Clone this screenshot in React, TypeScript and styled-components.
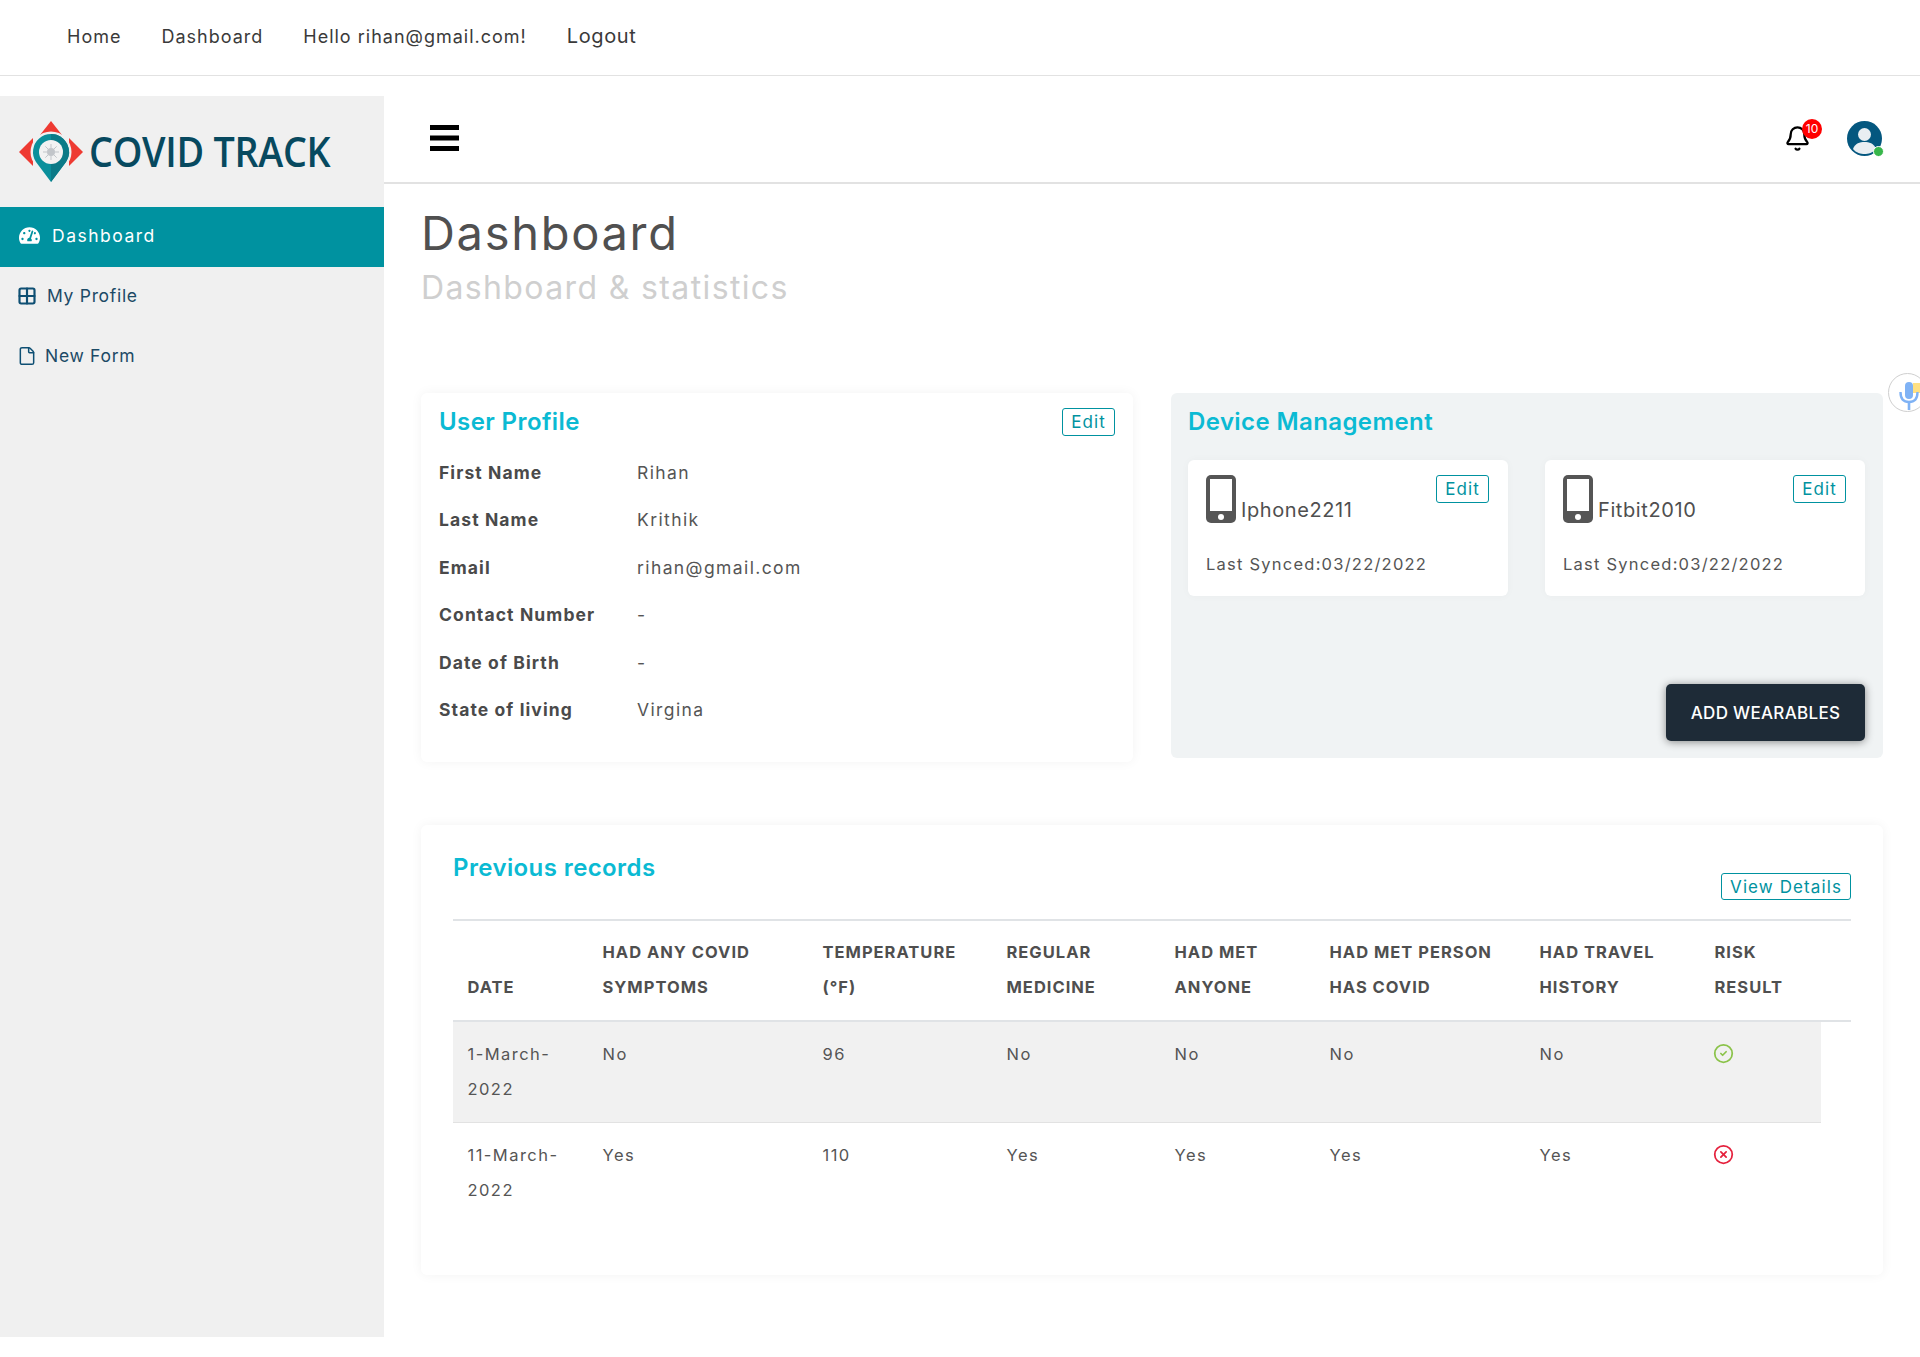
import React from "react";
import styled, { createGlobalStyle } from "styled-components";
import { Bell, CircleCheck, CircleX, File, Grid2x2 } from "lucide-react";
import { FaTachometerAlt } from "react-icons/fa";

const Global = createGlobalStyle`
  html, body { margin: 0; padding: 0; background: #fff; overflow: hidden; }
  * { box-sizing: border-box; }
  body { font-family: Inter, "Open Sans", sans-serif; color: #4f4f4f; }
`;

const Root = styled.div`
  position: relative;
  width: 1920px;
  height: 1357px;
  overflow: hidden;
`;

const TopNav = styled.nav`
  height: 76px;
  border-bottom: 1px solid #e2e2e2;
  display: flex;
  align-items: center;
  padding: 0 0 3px 67px;
  gap: 40px;
`;

const TopLink = styled.a<{ $big?: boolean }>`
  color: #3a3a3a;
  font-size: ${(p) => (p.$big ? "20px" : "18px")};
  letter-spacing: ${(p) => (p.$big ? "0.6px" : "1px")};
  font-weight: 400;
`;

const Shell = styled.div`
  display: flex;
  margin-top: 20px;
`;

const Sidebar = styled.aside`
  width: 384px;
  height: 1241px;
  flex: none;
  background: #f0f0f0;
`;

const Brand = styled.div`
  height: 111px;
  display: flex;
  align-items: flex-start;
  padding: 23px 0 0 18px;
  gap: 5px;
`;

const BrandText = styled.span`
  font-family: "Open Sans", sans-serif;
  font-size: 41px;
  font-weight: 600;
  color: #07495f;
  letter-spacing: -0.3px;
  line-height: 65px;
  white-space: nowrap;
  transform: scaleX(0.92);
  transform-origin: left center;
`;

const MenuItem = styled.a<{ $active?: boolean; $gap: number }>`
  height: 60px;
  display: flex;
  align-items: center;
  gap: ${(p) => p.$gap}px;
  padding: 0 0 3px 19px;
  font-size: 17.5px;
  letter-spacing: ${(p) => (p.$active ? "1.5px" : "0.7px")};
  color: ${(p) => (p.$active ? "#fff" : "#1c4a66")};
  background: ${(p) => (p.$active ? "#0092a0" : "transparent")};
  > svg {
    flex: none;
    margin-left: ${(p) => (p.$active ? "0" : "-2px")};
  }
`;

const Main = styled.main`
  flex: 1;
  min-width: 0;
`;

const MainHeader = styled.header`
  height: 88px;
  border-bottom: 2px solid #e2e2e2;
  display: flex;
  align-items: center;
  justify-content: space-between;
  padding: 0 38px 2px 46px;
`;

const HeaderIcons = styled.div`
  display: flex;
  align-items: center;
  gap: 38px;
  margin-top: 1px;
`;

const BellWrap = styled.div`
  position: relative;
  width: 24px;
  height: 24px;
  margin: -4px 1px 0 -1px;
`;

const Badge = styled.span`
  position: absolute;
  top: -6px;
  left: 18px;
  width: 20px;
  height: 20px;
  border-radius: 50%;
  background: #ff0000;
  color: #fff;
  font-size: 12px;
  display: flex;
  align-items: center;
  justify-content: center;
`;

const AvatarWrap = styled.div`
  position: relative;
  width: 35px;
  height: 35px;
`;

const OnlineDot = styled.span`
  position: absolute;
  right: -2px;
  bottom: -1px;
  width: 11px;
  height: 11px;
  border-radius: 50%;
  background: #38b64a;
  border: 1px solid #fff;
`;

const Content = styled.div`
  padding: 24px 37px 0;
`;

const PageTitle = styled.h1`
  margin: 0;
  font-size: 47px;
  line-height: 50px;
  font-weight: 400;
  color: #505050;
  letter-spacing: 1.7px;
`;

const PageSub = styled.h2`
  margin: 10px 0 0;
  font-size: 32px;
  line-height: 40px;
  font-weight: 400;
  color: #cfcfcf;
  letter-spacing: 1.37px;
`;

const TwoCols = styled.div`
  display: grid;
  grid-template-columns: 712px 712px;
  gap: 38px;
  align-items: start;
  margin-top: 85px;
`;

const ProfileCard = styled.section`
  height: 369px;
  background: #fff;
  border-radius: 6px;
  box-shadow: 0 0 12px rgba(0, 0, 0, 0.05);
  padding: 15px 18px 0;
`;

const CardHead = styled.div`
  display: flex;
  justify-content: space-between;
  align-items: flex-start;
`;

const CardTitle = styled.h3`
  margin: 0;
  font-size: 24px;
  line-height: 28px;
  font-weight: 600;
  color: #0bbad3;
  letter-spacing: 0.4px;
`;

const OutlineButton = styled.button<{ $wide?: boolean }>`
  height: ${(p) => (p.$wide ? "27px" : "28px")};
  padding: 0 8px;
  background: #fff;
  border: 1px solid #0092a0;
  border-radius: 3px;
  color: #0092a0;
  font: inherit;
  font-size: 17px;
  letter-spacing: 1.1px;
`;

const ProfileRows = styled.dl`
  margin: 12.5px 0 0;
  display: grid;
  grid-template-columns: 198px 1fr;
  grid-auto-rows: 47.5px;
  align-items: center;
  font-size: 17.5px;
`;

const RowLabel = styled.dt`
  font-weight: 700;
  color: #4a4a4a;
  letter-spacing: 1.1px;
`;

const RowValue = styled.dd`
  margin: 0;
  color: #555;
  letter-spacing: 1.4px;
`;

const DevicePanel = styled.section`
  height: 365px;
  background: #f0f3f4;
  border-radius: 6px;
  padding: 15px 18px 0 17px;
  display: flex;
  flex-direction: column;
`;

const DeviceGrid = styled.div`
  display: grid;
  grid-template-columns: 320px 320px;
  gap: 37px;
  margin-top: 24px;
`;

const DeviceCard = styled.div`
  height: 136px;
  background: #fff;
  border-radius: 6px;
  padding: 15px 19px 0 18px;
  box-shadow: 0 0 8px rgba(0, 0, 0, 0.03);
`;

const DeviceTop = styled.div`
  display: flex;
  justify-content: space-between;
  align-items: flex-start;
`;

const DeviceName = styled.div`
  display: flex;
  align-items: flex-end;
  gap: 5px;
  font-size: 20px;
  line-height: 26px;
  color: #4f4f4f;
  letter-spacing: 0.6px;
`;

const DeviceSynced = styled.div`
  margin-top: 31px;
  font-size: 16.5px;
  color: #555;
  letter-spacing: 1.23px;
`;

const AddButton = styled.button`
  align-self: flex-end;
  margin-top: auto;
  margin-bottom: 17px;
  width: 199px;
  height: 57px;
  border: 0;
  border-radius: 5px;
  background: #1e2b37;
  color: #fff;
  font: inherit;
  font-size: 17px;
  font-weight: 500;
  letter-spacing: 0.3px;
  box-shadow: 0 1px 8px rgba(0, 0, 0, 0.45);
`;

const RecordsCard = styled.section`
  margin-top: 63px;
  height: 450px;
  background: #fff;
  border-radius: 6px;
  box-shadow: 0 0 12px rgba(0, 0, 0, 0.05);
  padding: 29px 32px 0;
`;

const RecordsHead = styled.div`
  height: 65px;
  display: flex;
  justify-content: space-between;
  align-items: flex-start;
`;

const DetailsWrap = styled.div`
  margin-top: 19px;
`;

const HeadRow = styled.div`
  display: grid;
  grid-template-columns: 135px 220px 184px 168px 155px 210px 175px 151px;
  border-top: 2px solid #e0e3e6;
  border-bottom: 2px solid #e0e3e6;
  padding: 14px 0 15px;
  line-height: 35px;
  font-size: 16.5px;
  font-weight: 700;
  color: #4f4f4f;
  letter-spacing: 1px;
  text-transform: uppercase;
`;

const HeadCell = styled.div`
  padding-left: 14.5px;
  align-self: end;
`;

const DataRow = styled.div<{ $striped?: boolean }>`
  width: 1368px;
  display: grid;
  grid-template-columns: 135px 220px 184px 168px 155px 210px 175px 121px;
  padding: 15px 0;
  line-height: 35px;
  font-size: 16.5px;
  color: #555;
  letter-spacing: 1.45px;
  background: ${(p) => (p.$striped ? "#f1f1f1" : "transparent")};
  border-bottom: ${(p) => (p.$striped ? "1px solid #e2e2e2" : "0")};
`;

const DataCell = styled.div`
  padding-left: 14.5px;
`;

const StatusCell = styled(DataCell)`
  display: flex;
  align-items: flex-start;
  padding-top: 6px;
  padding-left: 13px;
`;

const MicBubble = styled.div`
  position: absolute;
  left: 1888px;
  top: 373px;
  width: 39px;
  height: 39px;
  border-radius: 50%;
  background: #fff;
  border: 1px solid #cfcfcf;
  overflow: hidden;
`;

const Logo = () => (
  <svg width="66" height="66" viewBox="0 0 66 66" style={{ flex: "none" }}>
    <polygon points="33,2 44,16 22,16" fill="#ee3a32" />
    <polygon points="1,33 15,19 15,47" fill="#ee3a32" />
    <polygon points="65,33 51,19 51,47" fill="#ee3a32" />
    <circle cx="33" cy="33" r="20.5" fill="#f0f0f0" />
    <path d="M33 63 L18 43 A18 18 0 1 1 48 43 Z" fill="#0a8f9b" />
    <path d="M33 63 L33 15 A18 18 0 0 1 48 43 Z" fill="#0b7a87" />
    <circle cx="33" cy="33" r="12" fill="#f2f2f2" />
    <circle cx="33" cy="33" r="4" fill="#c2c5c9" />
    {[0, 45, 90, 135, 180, 225, 270, 315].map((a) => (
      <line
        key={a}
        x1={33 + 4 * Math.cos((a * Math.PI) / 180)}
        y1={33 + 4 * Math.sin((a * Math.PI) / 180)}
        x2={33 + 8 * Math.cos((a * Math.PI) / 180)}
        y2={33 + 8 * Math.sin((a * Math.PI) / 180)}
        stroke="#c2c5c9"
        strokeWidth="1"
      />
    ))}
  </svg>
);

const Burger = () => (
  <svg width="29" height="26" viewBox="0 0 29 26">
    <rect x="0" y="0" width="29" height="5" fill="#000" />
    <rect x="0" y="10.5" width="29" height="5" fill="#000" />
    <rect x="0" y="21" width="29" height="5" fill="#000" />
  </svg>
);

const Avatar = () => (
  <svg width="35" height="35" viewBox="0 0 35 35">
    <circle cx="17.5" cy="17.5" r="17.5" fill="#04577f" />
    <circle cx="17.5" cy="13.5" r="6.5" fill="#e9eef2" />
    <path d="M6 28 C8 22 13 21 17.5 21 C22 21 27 22 29 28 C26 32 21 33 17.5 33 C14 33 9 32 6 28 Z" fill="#e9eef2" />
  </svg>
);

const Phone = () => (
  <svg width="30" height="48" viewBox="0 0 30 48" style={{ flex: "none" }}>
    <rect x="0" y="0" width="30" height="48" rx="5" fill="#555" />
    <rect x="4" y="4" width="22" height="32" fill="#fff" />
    <circle cx="15" cy="42" r="3" fill="#fff" />
  </svg>
);

const Mic = () => (
  <svg width="39" height="39" viewBox="0 0 39 39" style={{ display: "block", margin: "-1px" }}>
    <rect x="25" y="10" width="8" height="10" fill="#ffe082" />
    <rect x="17" y="9" width="8" height="17" rx="4" fill="#7fb2f5" />
    <path d="M12.5 19 C12.5 26 16 29 21 29 C26 29 29.5 26 29.5 19" fill="none" stroke="#7fb2f5" strokeWidth="2.4" />
    <rect x="19.7" y="28" width="2.6" height="9" fill="#7fb2f5" />
  </svg>
);

const profile: [string, string][] = [
  ["First Name", "Rihan"],
  ["Last Name", "Krithik"],
  ["Email", "rihan@gmail.com"],
  ["Contact Number", "-"],
  ["Date of Birth", "-"],
  ["State of living", "Virgina"],
];

const heads: React.ReactNode[] = [
  "Date",
  <>Had any covid<br />symptoms</>,
  <>Temperature<br />(°F)</>,
  <>Regular<br />medicine</>,
  <>Had met<br />anyone</>,
  <>Had met person<br />has covid</>,
  <>Had travel<br />history</>,
  <>Risk<br />result</>,
];

const rows = [
  { date: "1-March-2022", cells: ["No", "96", "No", "No", "No", "No"], ok: true },
  { date: "11-March-2022", cells: ["Yes", "110", "Yes", "Yes", "Yes", "Yes"], ok: false },
];

export default function App() {
  return (
    <Root>
      <Global />
      <TopNav>
        <TopLink>Home</TopLink>
        <TopLink>Dashboard</TopLink>
        <TopLink>Hello rihan@gmail.com!</TopLink>
        <TopLink $big>Logout</TopLink>
      </TopNav>
      <Shell>
        <Sidebar>
          <Brand>
            <Logo />
            <BrandText>COVID TRACK</BrandText>
          </Brand>
          <MenuItem $active $gap={12}>
            <FaTachometerAlt size={21} />
            Dashboard
          </MenuItem>
          <MenuItem $gap={10}>
            <Grid2x2 size={20} strokeWidth={2.6} color="#0e4f73" />
            My Profile
          </MenuItem>
          <MenuItem $gap={8}>
            <File size={20} strokeWidth={1.8} color="#0e4f73" />
            New Form
          </MenuItem>
        </Sidebar>
        <Main>
          <MainHeader>
            <Burger />
            <HeaderIcons>
              <BellWrap>
                <Bell size={27} color="#000" strokeWidth={2} />
                <Badge>10</Badge>
              </BellWrap>
              <AvatarWrap>
                <Avatar />
                <OnlineDot />
              </AvatarWrap>
            </HeaderIcons>
          </MainHeader>
          <Content>
            <PageTitle>Dashboard</PageTitle>
            <PageSub>Dashboard &amp; statistics</PageSub>
            <TwoCols>
              <ProfileCard>
                <CardHead>
                  <CardTitle>User Profile</CardTitle>
                  <OutlineButton>Edit</OutlineButton>
                </CardHead>
                <ProfileRows>
                  {profile.map(([k, v]) => (
                    <React.Fragment key={k}>
                      <RowLabel>{k}</RowLabel>
                      <RowValue>{v}</RowValue>
                    </React.Fragment>
                  ))}
                </ProfileRows>
              </ProfileCard>
              <DevicePanel>
                <CardTitle>Device Management</CardTitle>
                <DeviceGrid>
                  {["Iphone2211", "Fitbit2010"].map((d) => (
                    <DeviceCard key={d}>
                      <DeviceTop>
                        <DeviceName>
                          <Phone />
                          {d}
                        </DeviceName>
                        <OutlineButton>Edit</OutlineButton>
                      </DeviceTop>
                      <DeviceSynced>Last Synced:03/22/2022</DeviceSynced>
                    </DeviceCard>
                  ))}
                </DeviceGrid>
                <AddButton>ADD WEARABLES</AddButton>
              </DevicePanel>
            </TwoCols>
            <RecordsCard>
              <RecordsHead>
                <CardTitle>Previous records</CardTitle>
                <DetailsWrap>
                  <OutlineButton $wide>View Details</OutlineButton>
                </DetailsWrap>
              </RecordsHead>
              <HeadRow>
                {heads.map((h, i) => (
                  <HeadCell key={i}>{h}</HeadCell>
                ))}
              </HeadRow>
              {rows.map((r, i) => (
                <DataRow key={r.date} $striped={i === 0}>
                  <DataCell>{r.date}</DataCell>
                  {r.cells.map((c, j) => (
                    <DataCell key={j}>{c}</DataCell>
                  ))}
                  <StatusCell>
                    {r.ok ? (
                      <CircleCheck size={21} color="#8bc34a" />
                    ) : (
                      <CircleX size={21} color="#e5213d" />
                    )}
                  </StatusCell>
                </DataRow>
              ))}
            </RecordsCard>
          </Content>
        </Main>
      </Shell>
      <MicBubble>
        <Mic />
      </MicBubble>
    </Root>
  );
}
